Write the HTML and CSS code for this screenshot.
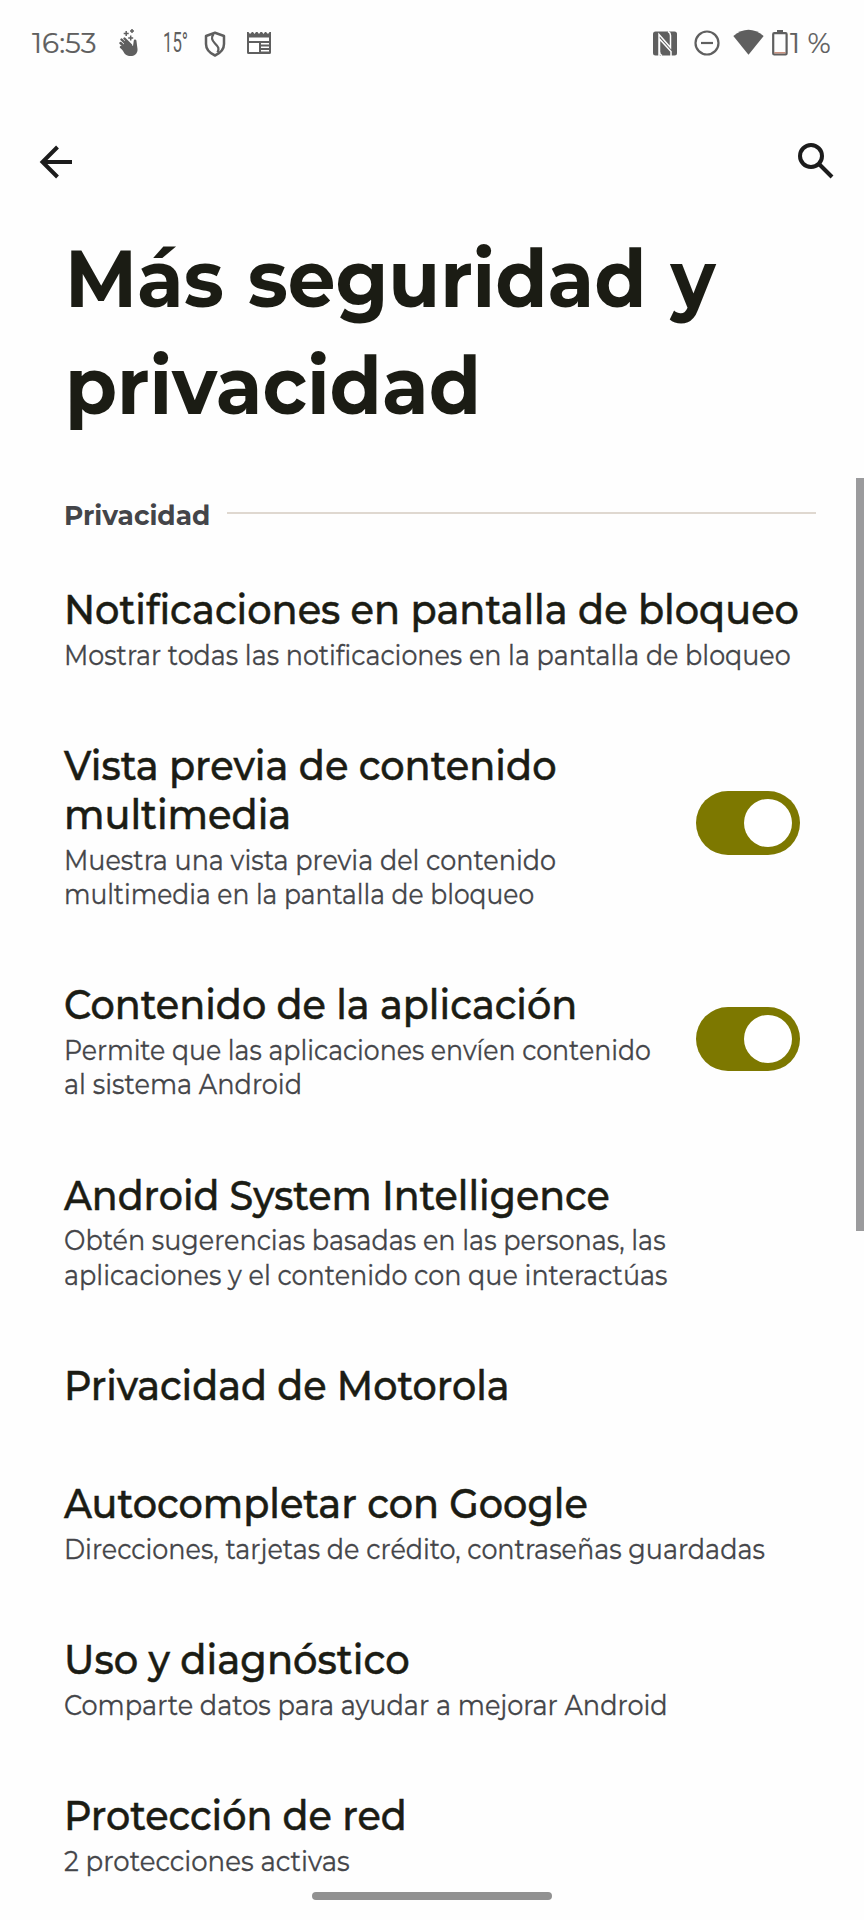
FILE: index.html
```
<!DOCTYPE html>
<html lang="es">
<head>
<meta charset="utf-8">
<title>Más seguridad y privacidad</title>
<link rel="stylesheet" href="styles.css">
</head>
<body>
<div class="screen">
  <header class="status">
    <span class="clock">16:53</span>
    <svg class="ic-hand" width="20" height="28" viewBox="0 0 20 28">
      <path d="M7.2 2v5M4.7 4.500h5M13 0v4M11 2h4M11.700 6.500v5M9.200 9h5" stroke="#5f5f5f" stroke-width="1.500" fill="none"/>
      <path d="M2.500 10.500L9 17M1.500 14L8 20M2 18l5 4.500M5.500 9.500L12 16" stroke="#5f5f5f" stroke-width="2.400" stroke-linecap="round"/>
      <path d="M6 11l8 6 .8-5.500c.2-1.500 2.200-1.500 2.600 0L18.500 20c.4 3.500-2 6.500-5.500 7-3 .3-5.500-.5-7.500-2.500L3.500 21z" fill="#5f5f5f"/>
    </svg>
    <span class="temp">15°</span>
    <svg class="ic-shield" width="22" height="26" viewBox="0 0 22 26" fill="none" stroke="#5f5f5f">
      <path d="M11 1.800L20 5v8c0 5-3.500 9-9 11.500C5.500 22 2 18 2 13V5z" stroke-width="2.500" stroke-linejoin="round"/>
      <path d="M9.500 3C7 6.500 7.500 9 11 12.500s4.500 5 2.500 9" stroke-width="2.300"/>
    </svg>
    <svg class="ic-cal" width="26" height="24" viewBox="0 0 26 24">
      <path d="M1 1h1.500l1.500 2 2-2h1l1.500 2 1.500-2h1.500l1.500 2 1.500-2H16l1.500 2 1.500-2h1l2 2 1.500-2H25v20.500a1.500 1.500 0 0 1-1.500 1.500h-21A1.500 1.500 0 0 1 1 21.500z" fill="#5f5f5f"/>
      <path d="M3 6.500h20v3.500H3zM3 12h10v9H3zM15 12h8v1.400h-8zM15 15.500h8v1.400h-8zM15 19h8v1.400h-8z" fill="#fff"/>
    </svg>
    <span class="spacer"></span>
    <svg class="ic-nfc" width="24" height="25" viewBox="0 0 24 25">
      <rect x="0" y="0.500" width="24" height="24" rx="2.500" fill="#5f5f5f"/>
      <path d="M6 25V3.500L17.500 16.500V4.500Q17.500 1.500 15 .5M18 25V20.500L6.500 8V20.500Q6.500 23.500 9 24.500" fill="none" stroke="#fff" stroke-width="1.500"/>
    </svg>
    <svg class="ic-dnd" width="26" height="26" viewBox="0 0 26 26" fill="none" stroke="#5f5f5f" stroke-width="2.200">
      <circle cx="13" cy="13" r="11.500"/><path d="M7 13h12"/>
    </svg>
    <svg class="ic-wifi" width="31" height="26" viewBox="0 0 31 26"><path d="M.3 7Q15.500-5.500 30.700 7L15.500 25.700z" fill="#5f5f5f"/></svg>
    <svg class="ic-bat" width="16" height="26" viewBox="0 0 16 26">
      <path d="M5 0h6v3H5z" fill="#5f5f5f"/><rect x="1.200" y="3.200" width="13.400" height="21.300" rx="1" fill="none" stroke="#5f5f5f" stroke-width="2.200"/>
      <path d="M2.300 22.800h11.200" stroke="#b5654a" stroke-width="1"/>
    </svg>
    <span class="percent">1 %</span>
  </header>
  <nav class="toolbar">
    <svg width="34" height="34" viewBox="0 0 34 34" fill="none" stroke="#1c1c1c" stroke-width="4"><path d="M33 17H4M18.500 2L3.500 17l15 15"/></svg>
    <svg width="36" height="36" viewBox="0 0 36 36" fill="none" stroke="#1c1c1c" stroke-width="4"><circle cx="13" cy="13" r="11"/><path d="M20.500 20.500L34 34"/></svg>
  </nav>
  <h1 class="heading"><span>Más seguridad y</span><span>privacidad</span></h1>
  <div class="section"><h2>Privacidad</h2><span class="rule"></span></div>
  <main class="list">
    <div class="item"><div class="text">
      <p class="title"><span>Notificaciones en pantalla de bloqueo</span></p>
      <p class="sub"><span class="s-not">Mostrar todas las notificaciones en la pantalla de bloqueo</span></p></div></div>
    <div class="item upper"><div class="text">
      <p class="title"><span>Vista previa de contenido</span><span>multimedia</span></p>
      <p class="sub"><span>Muestra una vista previa del contenido</span><span class="s-mul">multimedia en la pantalla de bloqueo</span></p></div>
      <span class="toggle"><span class="knob"></span></span></div>
    <div class="item"><div class="text">
      <p class="title"><span class="t-con">Contenido de la aplicación</span></p>
      <p class="sub"><span class="s-per">Permite que las aplicaciones envíen contenido</span><span class="s-com">al sistema Android</span></p></div>
      <span class="toggle"><span class="knob"></span></span></div>
    <div class="item"><div class="text">
      <p class="title"><span class="t-asi">Android System Intelligence</span></p>
      <p class="sub"><span>Obtén sugerencias basadas en las personas, las</span><span>aplicaciones y el contenido con que interactúas</span></p></div></div>
    <div class="item"><div class="text">
      <p class="title"><span class="t-mot">Privacidad de Motorola</span></p></div></div>
    <div class="item"><div class="text">
      <p class="title"><span class="t-aut">Autocompletar con Google</span></p>
      <p class="sub"><span>Direcciones, tarjetas de crédito, contraseñas guardadas</span></p></div></div>
    <div class="item"><div class="text">
      <p class="title"><span class="t-uso">Uso y diagnóstico</span></p>
      <p class="sub"><span class="s-com">Comparte datos para ayudar a mejorar Android</span></p></div></div>
    <div class="item"><div class="text">
      <p class="title"><span class="t-mot">Protección de red</span></p>
      <p class="sub"><span class="s-pro">2 protecciones activas</span></p></div></div>
  </main>
  <div class="scrollbar"></div>
  <div class="pill"></div>
</div>
</body>
</html>
```
FILE: styles.css
```
* { box-sizing: border-box; margin: 0; padding: 0; }
body { background: #fefefe; }
.screen {
  position: relative;
  width: 864px;
  height: 1920px;
  overflow: hidden;
  background: #fefefe;
  font-family: Montserrat, Inter, sans-serif;
  color: #1b1c14;
}
svg { display: block; flex: none; }
.status {
  display: flex;
  align-items: center;
  height: 86px;
  padding: 0 32px;
  color: #5f5f5f;
  font-size: 28px;
  white-space: pre;
}
.clock { width: 87px; -webkit-text-stroke: .2px; }
.temp {
  width: 41px;
  margin-left: 24px;
  font: 400 27px Roboto, sans-serif;
  transform: scaleX(.62);
  transform-origin: left center;
}
.ic-shield { margin-top: 1px; }
.ic-cal { margin-left: 20px; }
.spacer { flex: 1; }
.ic-nfc { margin-right: 17px; }
.ic-dnd { margin-right: 13px; }
.ic-wifi { margin: 0 8px 2px 0; }
.ic-bat { margin-bottom: 1px; }
.percent { width: 42px; margin-left: 2px; -webkit-text-stroke: .2px; }
.toolbar {
  display: flex;
  justify-content: space-between;
  height: 140px;
  padding: 57px 30px 0 39px;
}
.toolbar svg:first-child { margin-top: 2px; }
.heading span, .title span, .sub span {
  display: block;
  width: max-content;
  white-space: nowrap;
  transform-origin: left center;
}
.heading {
  padding-left: 64.500px;
  font-size: 80px;
  font-weight: 700;
  line-height: 106.700px;
  word-spacing: 2.600px;
}
.heading span { transform: scaleX(.944); }
.section {
  display: flex;
  align-items: center;
  height: 34px;
  margin: 58.100px 48px 53.600px 64px;
  color: #444549;
}
.section h2 {
  flex: none;
  width: 162.500px;
  font-size: 28px;
  line-height: 34px;
  transform: scaleX(.943);
  transform-origin: left center;
}
.rule { flex: 1; height: 2px; margin-bottom: 3px; background: #dfd8d0; }
.list { display: flex; flex-direction: column; gap: 69.100px; }
.item {
  display: flex;
  align-items: center;
  justify-content: space-between;
  padding: 0 64px;
}
.text { width: 600px; }
.title {
  font-size: 40px;
  font-weight: 500;
  line-height: 49px;
  -webkit-text-stroke: .5px;
}
.sub {
  margin-top: 3.600px;
  font-size: 28px;
  line-height: 34.300px;
  color: #444549;
  -webkit-text-stroke: .3px;
}
.title span { transform: scaleX(.958); }
.title .t-con { transform: scaleX(.955); }
.title .t-asi { transform: scaleX(.950); }
.title .t-mot { transform: scaleX(.953); }
.title .t-aut { transform: scaleX(.956); }
.title .t-uso { transform: scaleX(.962); }
.sub span { transform: scaleX(.910); }
.sub .s-not { transform: scaleX(.907); }
.sub .s-mul { transform: scaleX(.893); }
.sub .s-per { transform: scaleX(.901); }
.sub .s-com { transform: scaleX(.914); }
.sub .s-pro { transform: scaleX(.929); }
.toggle {
  display: flex;
  flex: none;
  justify-content: flex-end;
  align-items: center;
  width: 104px;
  height: 64px;
  margin-bottom: 4px;
  padding-right: 8px;
  border-radius: 32px;
  background: #7d7800;
}
.upper .toggle { margin-bottom: 6px; }
.knob { width: 48px; height: 48px; border-radius: 50%; background: #fff; }
.scrollbar { position: absolute; right: 0; top: 478px; width: 8px; height: 753px; background: #9b9b9d; }
.pill { position: absolute; left: 312px; top: 1892px; width: 240px; height: 8px; border-radius: 4px; background: #919191; }
```
